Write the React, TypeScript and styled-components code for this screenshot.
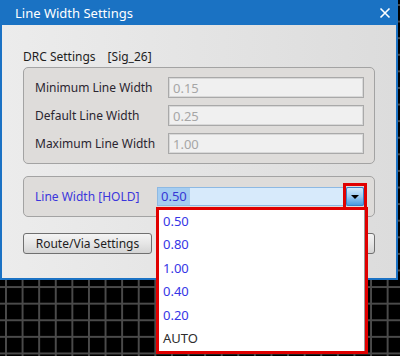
import React from 'react';
import styled, { createGlobalStyle } from 'styled-components';

const GlobalStyle = createGlobalStyle`
  html, body {
    margin: 0;
    padding: 0;
    background: #000;
  }
  body {
    font-family: 'Noto Sans', 'DejaVu Sans', sans-serif;
  }
`;

const widthOptions = [
  { label: '0.50', auto: false },
  { label: '0.80', auto: false },
  { label: '1.00', auto: false },
  { label: '0.40', auto: false },
  { label: '0.20', auto: false },
  { label: 'AUTO', auto: true },
];

const drcRows = [
  { label: 'Minimum Line Width', value: '0.15' },
  { label: 'Default Line Width', value: '0.25' },
  { label: 'Maximum Line Width', value: '1.00' },
];

function CloseIcon() {
  return (
    <svg width="12" height="12" viewBox="0 0 12 12">
      <path d="M1.5 1.5 L10.5 10.5 M10.5 1.5 L1.5 10.5" stroke="#fff" strokeWidth="1.6" />
    </svg>
  );
}

function App() {
  return (
    <>
      <GlobalStyle />
      <Desktop>
        <Window>
          <TitleBar>
            <Title>Line Width Settings</Title>
            <CloseButton>
              <CloseIcon />
            </CloseButton>
          </TitleBar>
          <Body>
            <Caption>
              DRC Settings<NetName>[Sig_26]</NetName>
            </Caption>
            <GroupBox>
              {drcRows.map((row) => (
                <React.Fragment key={row.label}>
                  <FieldLabel>{row.label}</FieldLabel>
                  <TextBox>{row.value}</TextBox>
                </React.Fragment>
              ))}
            </GroupBox>
            <ComboGroup>
              <FieldLabel hold>Line Width [HOLD]</FieldLabel>
              <Combo>
                <SelectedText>0.50</SelectedText>
                <DropButton>
                  <Arrow />
                </DropButton>
                <ButtonMark />
                <DropList>
                  {widthOptions.map((opt) => (
                    <ListItem key={opt.label} auto={opt.auto}>
                      {opt.label}
                    </ListItem>
                  ))}
                </DropList>
              </Combo>
            </ComboGroup>
            <ButtonRow>
              <PushButton>Route/Via Settings</PushButton>
              <PushButton>Close</PushButton>
            </ButtonRow>
          </Body>
        </Window>
      </Desktop>
    </>
  );
}

export default App;

const Desktop = styled.div`
  width: 400px;
  height: 356px;
  overflow: hidden;
  background-color: #000;
  background-image: linear-gradient(to right, #4a4a4a 2px, transparent 2px),
    linear-gradient(to bottom, #4a4a4a 2px, transparent 2px);
  background-size: 16.6px 16.6px;
  background-position: 5px 4px;
`;

const Window = styled.div`
  width: 398px;
  height: 280px;
  box-sizing: border-box;
  display: flex;
  flex-direction: column;
  border: 2px solid #1b72c4;
  border-top: none;
  background: linear-gradient(to right, #ececec, #dcdcdc);
`;

const TitleBar = styled.div`
  height: 25px;
  flex-shrink: 0;
  margin: 0 -2px;
  padding: 0 6px 0 15px;
  display: flex;
  align-items: center;
  justify-content: space-between;
  background: #1a72c3;
`;

const Title = styled.span`
  color: #fff;
  font-size: 13px;
`;

const CloseButton = styled.span`
  display: flex;
  align-items: center;
  justify-content: center;
  width: 14px;
  height: 14px;
`;

const Body = styled.div`
  display: flex;
  flex-direction: column;
  padding: 0 21px;
`;

const Caption = styled.div`
  margin-top: 24px;
  height: 15px;
  line-height: 15px;
  font-size: 12px;
  color: #1e1e1e;
`;

const NetName = styled.span`
  margin-left: 12px;
`;

const GroupBox = styled.div`
  margin-top: 3px;
  display: grid;
  grid-template-columns: 133px 196px;
  row-gap: 7px;
  align-items: center;
  padding: 9px 10px 9px 11px;
  border: 1px solid #a3a3a3;
  border-radius: 5px;
  background: #dedcda;
`;

const FieldLabel = styled.span<{ hold?: boolean }>`
  font-size: 12px;
  color: ${(p) => (p.hold ? '#3b36dc' : '#2b2630')};
`;

const TextBox = styled.div`
  height: 21px;
  box-sizing: border-box;
  padding-left: 4px;
  display: flex;
  align-items: center;
  font-size: 13px;
  color: #a6a6a6;
  background: #f0f0f0;
  border: 1px solid #a9a9a9;
  box-shadow: inset 0 0 0 1px #d8d8d8;
`;

const ComboGroup = styled.div`
  margin-top: 12px;
  display: grid;
  grid-template-columns: 122px 207px;
  align-items: center;
  padding: 10px 10px 10px 11px;
  border: 1px solid #a3a3a3;
  border-radius: 5px;
  background: #dedcda;
`;

const Combo = styled.div`
  position: relative;
  height: 19px;
  box-sizing: border-box;
  display: flex;
  align-items: center;
  border: 1px solid #8db9e3;
  background: #d7eafb;
`;

const SelectedText = styled.span`
  height: 17px;
  line-height: 17px;
  padding: 0 3px;
  font-size: 13px;
  color: #3636d4;
  background: #a5cdf1;
`;

const DropButton = styled.span`
  margin-left: auto;
  width: 18px;
  height: 19px;
  margin-right: -1px;
  box-sizing: border-box;
  display: flex;
  align-items: center;
  justify-content: center;
  border: 1px solid #3c7fc4;
  border-radius: 2px;
  background: linear-gradient(to bottom, #d4ebfb, #9ccbf0 50%, #4a9ae0);
`;

const Arrow = styled.span`
  width: 0;
  height: 0;
  border-left: 4px solid transparent;
  border-right: 4px solid transparent;
  border-top: 4px solid #000;
`;

const ButtonMark = styled.span`
  position: absolute;
  left: 185px;
  top: -5px;
  width: 24px;
  height: 27px;
  box-sizing: border-box;
  border: 3px solid #e00000;
  z-index: 2;
`;

const DropList = styled.div`
  position: absolute;
  left: -2px;
  top: 19px;
  width: 212px;
  height: 147px;
  box-sizing: border-box;
  border: 3px solid #e00000;
  background: #fff;
  box-shadow: inset -1px 0 0 #9a9a9a;
  z-index: 3;
`;

const ListItem = styled.div<{ auto?: boolean }>`
  height: 23.4px;
  line-height: 23.4px;
  padding-left: 4px;
  font-size: 13px;
  color: ${(p) => (p.auto ? '#2d2d2d' : '#3535e6')};
`;

const ButtonRow = styled.div`
  margin-top: 16px;
  display: flex;
  justify-content: space-between;
`;

const PushButton = styled.div`
  width: 129px;
  height: 21px;
  box-sizing: border-box;
  display: flex;
  align-items: center;
  justify-content: center;
  font-size: 12px;
  color: #1e1e1e;
  border: 1px solid #707070;
  border-radius: 3px;
  background: linear-gradient(to bottom, #f4f4f4, #e6e6e6 50%, #d4d4d4);
`;
